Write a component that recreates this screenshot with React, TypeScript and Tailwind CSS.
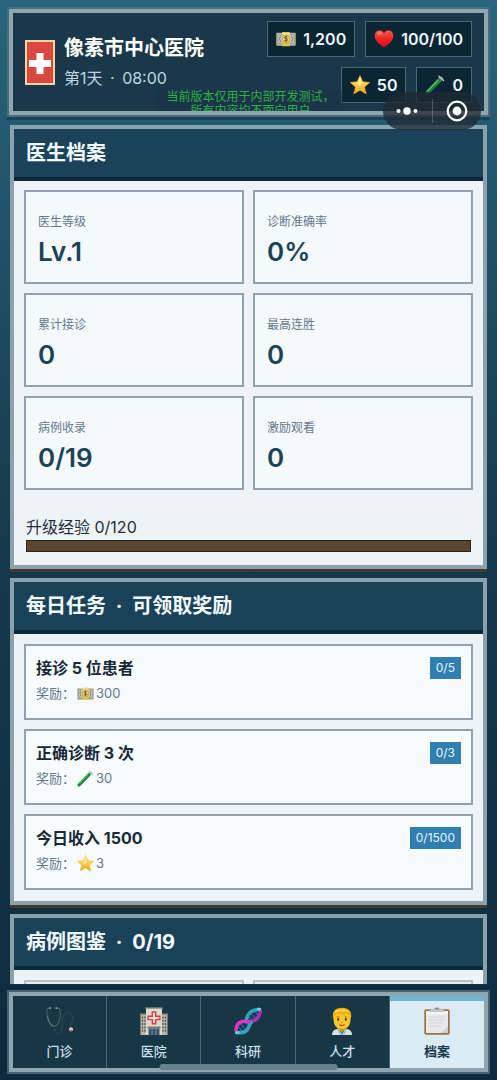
import React, { useState } from 'react';
import clsx from 'clsx';

interface IconProps {
  className?: string;
}

const MoneyIcon: React.FC<IconProps> = ({ className }) => (
  <svg viewBox="0 0 20 20" className={className} aria-hidden="true">
    <rect x="0.5" y="4.5" width="19" height="12.5" fill="#8e8f86" />
    <rect x="0.5" y="3.8" width="19" height="11.8" fill="#c9c8bb" />
    <rect x="1.8" y="5.2" width="16.4" height="9" fill="none" stroke="#8d8f84" strokeWidth="0.8" />
    <path d="M4.5 6.5Q2.5 9.7 4.5 13M15.5 6.5Q17.5 9.7 15.5 13" fill="none" stroke="#777a70" strokeWidth="1" />
    <rect x="6.3" y="3.3" width="7.4" height="14" fill="#e3c24a" />
    <rect x="6.3" y="3.3" width="7.4" height="4" fill="#f1dc86" />
    <circle cx="10" cy="9.8" r="3.9" fill="#ecd269" stroke="#a9892d" strokeWidth="0.6" />
    <path d="M11.6 8.1Q10 7 8.8 8.1T10 9.8T11.1 11.6Q10 12.5 8.4 11.5M10 6.8V12.8" fill="none" stroke="#5e5021" strokeWidth="0.9" />
  </svg>
);

const HeartIcon: React.FC<IconProps> = ({ className }) => (
  <svg viewBox="0 0 20 20" className={className} aria-hidden="true">
    <defs>
      <linearGradient id="heart" x1="0" y1="0" x2="0" y2="1">
        <stop offset="0" stopColor="#ff5a4e" />
        <stop offset="0.5" stopColor="#f2231f" />
        <stop offset="1" stopColor="#cb0f14" />
      </linearGradient>
    </defs>
    <path d="M10 18.8C7.5 16.6.7 12.8.7 6.8.7 3.6 2.9 1.4 5.6 1.4 7.6 1.4 9.2 2.6 10 4.3 10.8 2.6 12.4 1.4 14.4 1.4 17.1 1.4 19.3 3.6 19.3 6.8 19.3 12.8 12.5 16.6 10 18.8Z" fill="url(#heart)" />
    <ellipse cx="5.6" cy="4.5" rx="2.7" ry="1.7" fill="#ff8e80" opacity="0.6" />
  </svg>
);

const StarIcon: React.FC<IconProps> = ({ className }) => (
  <svg viewBox="0 0 20 20" className={className} aria-hidden="true">
    <defs>
      <linearGradient id="star" x1="0" y1="0" x2="0" y2="1">
        <stop offset="0" stopColor="#ffe9a0" />
        <stop offset="0.5" stopColor="#fdd248" />
        <stop offset="1" stopColor="#ee9c18" />
      </linearGradient>
    </defs>
    <path
      d="M10 .5L12.8 6.8 19.700 7.4 14.500 12 16.200 18.900 10 15.200 3.800 18.900 5.500 12 .3 7.400 7.200 6.800Z"
      fill="url(#star)"
      stroke="#f3b02d"
      strokeWidth="0.6"
      strokeLinejoin="round"
    />
    <path d="M10 3.5L11.3 8.2 10 11 6.5 9 8.4 8.2Z" fill="#fff4c8" opacity="0.7" />
  </svg>
);

const TubeIcon: React.FC<IconProps> = ({ className }) => (
  <svg viewBox="0 0 20 20" className={className} aria-hidden="true">
    <path d="M2.600 17.400L16 3.5" stroke="#8fb0a4" strokeWidth="4" strokeLinecap="round" opacity="0.75" />
    <path d="M2.600 17.400L14 5.6" stroke="#14812f" strokeWidth="3.600" strokeLinecap="round" />
    <path d="M2.4 16.400L13 5.5" stroke="#4fcf62" strokeWidth="1.2" strokeLinecap="round" />
    <path d="M14 1.3L18.6 5.6" stroke="#b5c5cb" strokeWidth="1.4" strokeLinecap="round" />
  </svg>
);

const StethoscopeIcon: React.FC<IconProps> = ({ className }) => (
  <svg viewBox="0 0 28 28" className={className} aria-hidden="true">
    <path d="M3.5 1.2Q.6 1 .8 5 1.5 14 5 18Q8 21 11.5 17.5 15 12.5 14.2 4 13.5.8 10.5 1.2" fill="none" stroke="#4b5f65" strokeWidth="1.1" />
    <path d="M1.5 9Q2.5 17 7.5 19" fill="none" stroke="#76878b" strokeWidth="0.8" />
    <path d="M8 19.5Q9 27.5 13 27 16.5 26 16 17 16 6 22 5.5 28 7 26.5 14 24 17 24.5 20" fill="none" stroke="#30444b" strokeWidth="1.2" />
    <path d="M3 1.2h2M9.5 1.2h2" stroke="#a9b3b3" strokeWidth="1.2" />
    <circle cx="24.8" cy="22.5" r="3" fill="#3a2c33" />
    <circle cx="25" cy="22.4" r="2.1" fill="#c8cdd0" />
    <path d="M23.3 23.8l3.2-.2" stroke="#8c444c" strokeWidth="1" />
  </svg>
);

const HospitalIcon: React.FC<IconProps> = ({ className }) => (
  <svg viewBox="0 0 28 28" className={className} aria-hidden="true">
    <path d="M.5 7h6v21h-6zM21.500 7h6v21h-6z" fill="#b9b5a5" />
    <path d="M0 6.500h7v1.500H0zM21 6.500h7V8h-7z" fill="#8b8a82" />
    <path d="M2.500 9.500v16M5 9.500v16M23 9.500v16M25.500 9.500v16" stroke="#4d5a5e" strokeWidth="1.300" strokeDasharray="2 1.300" />
    <rect x="6" y="1" width="16" height="27" fill="#dddacb" />
    <rect x="5.300" y="0.400" width="17.400" height="1.500" fill="#99958a" />
    <path d="M12.300 5h3.400v4.200h4.200v3.400h-4.200v4.200h-3.400v-4.200H8.100V9.200h4.200z" fill="#f0dcd4" stroke="#dc3d48" strokeWidth="1.400" />
    <rect x="7.500" y="19.500" width="13" height="2" fill="#77776d" />
    <rect x="8.500" y="21.500" width="11" height="6.500" fill="#38566d" />
    <path d="M12 21.500V28M16 21.500V28" stroke="#7d96a5" strokeWidth="0.800" />
  </svg>
);

const DnaIcon: React.FC<IconProps> = ({ className }) => (
  <svg viewBox="0 0 28 28" className={className} aria-hidden="true">
    <path d="M3.500 19L9 25M6 16L12 23M10 14L15 19M14 9L19 14M16.500 6L22 12M20 3.500L25 9" stroke="#245d9c" strokeWidth="1.700" />
    <path d="M11 14.500Q15 16 20 13.500 26.500 10.500 26.300 2.500" fill="none" stroke="#a92fb4" strokeWidth="3.600" />
    <path d="M2 25.500Q12 27 14.500 20.500 15.500 17 18 14.500" fill="none" stroke="#35a5b8" strokeWidth="3.600" />
    <path d="M12.500 13Q13 3 26.300 2.300" fill="none" stroke="#2fa4b6" strokeWidth="3.600" />
    <path d="M2 24Q1.500 16.500 8 14.500 12 13.800 16.500 15" fill="none" stroke="#df35c3" strokeWidth="3.600" />
    <path d="M1 25.500h4.500M23 2.200h4" stroke="#62d5dc" strokeWidth="2.600" />
  </svg>
);

const DoctorIcon: React.FC<IconProps> = ({ className }) => (
  <svg viewBox="0 0 28 28" className={className} aria-hidden="true">
    <path d="M4 28Q4 23 9 22L14 21 19 22Q24 23 24 28Z" fill="#d9e1e7" />
    <path d="M10.500 21.500L14 28 17.500 21.500Z" fill="#278b8b" />
    <path d="M10.500 19h7v3.500L14 25l-3.500-2.500z" fill="#d99a12" />
    <path d="M9.500 21.500L12.500 28M18.500 21.500L15.500 28" stroke="#8fa0ac" strokeWidth="0.900" />
    <path d="M5.500 9Q5.500 2 14 2T22.500 9V13Q22 22 14 22T5.500 13Z" fill="#fbc52b" />
    <path d="M5 11Q3.500 1 14 .8 24.500 1 23 11L21.500 11Q22 7.500 19.500 6.500 14 8.500 8.500 6.500 6 7.500 6.500 11Z" fill="#f0ae0d" />
    <path d="M7 5Q12 2 20 4.500" fill="none" stroke="#ffe06a" strokeWidth="1.500" />
    <path d="M8.500 10.200Q10 9 11.500 10.200M16.500 10.200Q18 9 19.500 10.200" fill="none" stroke="#a46f0b" strokeWidth="0.900" />
    <ellipse cx="10.200" cy="12.400" rx="1" ry="1.300" fill="#4c3210" />
    <ellipse cx="17.800" cy="12.400" rx="1" ry="1.300" fill="#4c3210" />
    <path d="M13.200 15.300h1.600" stroke="#c98a16" strokeWidth="1" />
    <path d="M11.300 17.800Q14 19.300 16.700 17.800" fill="none" stroke="#8d5013" strokeWidth="1.100" />
  </svg>
);

const ClipboardIcon: React.FC<IconProps> = ({ className }) => (
  <svg viewBox="0 0 28 28" className={className} aria-hidden="true">
    <rect x="1.300" y="2.200" width="25.400" height="25.600" rx="1.800" fill="#a0713f" />
    <rect x="3" y="4" width="22" height="22" fill="#e9e9eb" />
    <path d="M3 4h22v3H3z" fill="#f7f7f8" />
    <path d="M6 10h16M6 13h16M6 16h14M6 19h12" stroke="#d1d2d6" strokeWidth="0.900" />
    <path d="M25 19v7h-7z" fill="#cfcfd2" />
    <path d="M6.500 4.800V3.200Q6.500 2.200 8 2.200h2.500Q11.500.3 14 .3t3.500 1.900H20q1.500 0 1.500 1v1.600z" fill="#a9adb1" />
    <path d="M7.500 3.200h13" stroke="#dfe2e4" strokeWidth="0.900" />
    <circle cx="14" cy="1.900" r="0.800" fill="#6b7075" />
  </svg>
);

const resources = [
  { name: '资金', value: '1,200', Icon: MoneyIcon },
  { name: '体力', value: '100/100', Icon: HeartIcon },
  { name: '声望', value: '50', Icon: StarIcon },
  { name: '科研点', value: '0', Icon: TubeIcon },
];

const stats = [
  { label: '医生等级', value: 'Lv.1' },
  { label: '诊断准确率', value: '0%' },
  { label: '累计接诊', value: '0' },
  { label: '最高连胜', value: '0' },
  { label: '病例收录', value: '0/19' },
  { label: '激励观看', value: '0' },
];

const tasks = [
  { title: '接诊 5 位患者', reward: '300', progress: '0/5', Icon: MoneyIcon },
  { title: '正确诊断 3 次', reward: '30', progress: '0/3', Icon: TubeIcon },
  { title: '今日收入 1500', reward: '3', progress: '0/1500', Icon: StarIcon },
];

const tabs = [
  { label: '门诊', Icon: StethoscopeIcon },
  { label: '医院', Icon: HospitalIcon },
  { label: '科研', Icon: DnaIcon },
  { label: '人才', Icon: DoctorIcon },
  { label: '档案', Icon: ClipboardIcon },
];

const Header: React.FC = () => (
  <header className="mx-[9px] mt-[9px] flex shrink-0 items-center justify-between border-4 border-[#8fa5b1] bg-[#1b384a] px-3 py-2 shadow-[0_0_0_2px_#4a6b7b,0_3px_0_2px_#1b4358]">
    <div className="flex shrink-0 items-center gap-[9px]">
      <svg viewBox="0 0 30 45" className="h-[45px] w-[30px]" aria-hidden="true">
        <rect width="30" height="45" fill="#f3d5a0" />
        <rect x="2" y="2" width="26" height="41" fill="#d9483f" />
        <path d="M11.500 13h7v7H26v7h-7.500v7h-7v-7H4v-7h7.500z" fill="#fff" />
      </svg>
      <div>
        <h1 className="text-xl leading-8 font-bold text-white">像素市中心医院</h1>
        <p className="text-base leading-7 text-[#bdd3e2]">
          第1天 <span className="mx-[3px]">·</span> 08:00
        </p>
      </div>
    </div>
    <ul className="flex flex-wrap justify-end gap-[10px]">
      {resources.map(({ name, value, Icon }) => (
        <li
          key={name}
          aria-label={name}
          className="flex h-9 items-center gap-[7px] border border-[#49697a] bg-[#0c2533] px-2 text-base font-semibold text-[#eef8ff]"
        >
          <Icon className="size-5" />
          {value}
        </li>
      ))}
    </ul>
  </header>
);

interface PanelProps {
  title: string;
  note?: string;
  children: React.ReactNode;
}

const Panel: React.FC<PanelProps> = ({ title, note, children }) => (
  <section className="shrink-0 border-4 border-[#8ba1ae] bg-[#eef3f8] shadow-[0_3px_0_#47382c]">
    <h2 className="border-b-4 border-[#0e2838] bg-[#1a435a] px-3 text-xl leading-[48px] font-bold text-[#f3faff]">
      {title}
      {note && (
        <>
          {' '}
          <span className="mx-[5px]">·</span> {note}
        </>
      )}
    </h2>
    {children}
  </section>
);

const App: React.FC = () => {
  const [activeTab, setActiveTab] = useState('档案');

  return (
    <div className="relative flex h-screen flex-col overflow-hidden bg-linear-to-b from-[#28657c] via-[#17394d] via-50% to-[#0f2a3f] font-['Inter','Noto_Sans_CJK_SC',sans-serif]">
      <Header />

      <main className="flex min-h-0 flex-1 flex-col gap-[9px] overflow-hidden px-[10px] pt-[10px]">
        <Panel title="医生档案">
          <dl className="grid grid-cols-2 gap-[9px] px-[10px] pt-[9px]">
            {stats.map((stat) => (
              <div key={stat.label} className="border-2 border-[#8fa2ad] bg-[#f4f9fc] px-3 pt-[22px] pb-[14px]">
                <dt className="text-xs leading-4 text-[#64788b]">{stat.label}</dt>
                <dd className="mt-[6px] text-[26px] leading-8 font-semibold text-[#1b4357]">{stat.value}</dd>
              </div>
            ))}
          </dl>
          <div className="px-3 pt-[25px] pb-[13px]">
            <p className="text-base leading-6 text-[#1f2f3d]">升级经验 0/120</p>
            <div
              role="progressbar"
              aria-label="升级经验"
              aria-valuenow={0}
              aria-valuemax={120}
              className="mt-px h-3 border border-[#2a241d] bg-[#5a452e]"
            />
          </div>
        </Panel>

        <Panel title="每日任务" note="可领取奖励">
          <ul className="flex flex-col gap-[9px] px-[10px] pt-[10px] pb-[11px]">
            {tasks.map(({ title, reward, progress, Icon }) => (
              <li key={title} className="min-h-[76px] border-2 border-[#8fa2ad] bg-[#f8fbfe] p-[10px]">
                <div className="flex items-center justify-between">
                  <h3 className="text-base leading-6 font-bold text-[#182a38]">{title}</h3>
                  <span className="bg-[#2f7fb0] px-[6px] text-xs leading-[22px] text-[#e6f5ff]">{progress}</span>
                </div>
                <p className="mt-[3px] flex items-center text-[13px] leading-5 text-[#64788b]">
                  奖励：
                  <Icon className="mr-[2px] ml-[2px] size-[17px]" />
                  {reward}
                </p>
              </li>
            ))}
          </ul>
        </Panel>

        <Panel title="病例图鉴" note="0/19">
          <div className="grid grid-cols-2 gap-[9px] p-[10px]">
            <div className="h-[94px] border-2 border-[#b6c2ca] bg-[#e6ebef]" />
            <div className="h-[94px] border-2 border-[#b6c2ca] bg-[#e6ebef]" />
          </div>
        </Panel>
      </main>

      <nav className="mx-[9px] mt-2 mb-2 grid shrink-0 grid-cols-5 border-4 border-[#8fa5b1] bg-[#183746] shadow-[0_0_0_2px_#48616f]">
        {tabs.map(({ label, Icon }) => {
          const active = label === activeTab;
          return (
            <button
              key={label}
              type="button"
              aria-current={active ? 'page' : undefined}
              onClick={() => setActiveTab(label)}
              className={clsx(
                'flex h-[72px] flex-col items-center text-[13px]',
                active
                  ? 'border-t-[5px] border-[#70b5d1] bg-[#dbebf4] pt-[6px] font-bold text-[#1b3a4d]'
                  : 'border-r border-[#4c6977] pt-[11px] font-medium text-[#c9dfea]'
              )}
            >
              <Icon className="size-7" />
              <span className="mt-[7px] leading-[18px]">{label}</span>
            </button>
          );
        })}
      </nav>

      {/* test build notice */}
      <p className="absolute top-[90px] left-1/2 h-[21px] -translate-x-1/2 overflow-hidden bg-[#1a3344]/40 pr-2 pl-3 text-center text-xs leading-[14px] whitespace-nowrap text-[#2fb045]">
        当前版本仅用于内部开发测试，
        <br />
        所有内容均不面向用户
      </p>

      {/* mini program capsule */}
      <div className="absolute top-[92px] right-4 flex h-[38px] w-[98px] items-center rounded-full bg-[#1f2a33]/75">
        <button type="button" aria-label="更多" className="flex flex-1 justify-center border-r border-white/20">
          <svg viewBox="0 0 24 24" className="size-6" fill="#fff">
            <circle cx="3.500" cy="12" r="2" />
            <circle cx="12" cy="12" r="3.700" />
            <circle cx="20.500" cy="12" r="2" />
          </svg>
        </button>
        <button type="button" aria-label="关闭" className="flex flex-1 justify-center">
          <svg viewBox="0 0 24 24" className="size-6">
            <circle cx="12" cy="12" r="9.300" fill="none" stroke="#fff" strokeWidth="2.200" />
            <circle cx="12" cy="12" r="4.400" fill="#fff" />
          </svg>
        </button>
      </div>

      <div className="absolute bottom-[10px] left-1/2 h-[6px] w-9/25 -translate-x-1/2 rounded-full bg-[#66818e]" />
    </div>
  );
};

export default App;
